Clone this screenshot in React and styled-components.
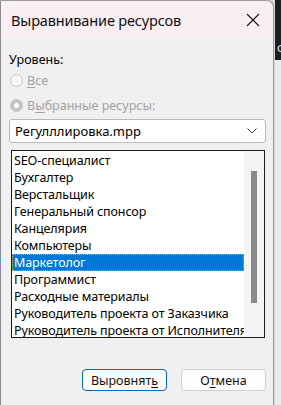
import React from 'react';
import styled, { createGlobalStyle } from 'styled-components';

const GlobalStyle = createGlobalStyle`
  html, body {
    margin: 0;
    padding: 0;
    width: 281px;
    height: 405px;
    overflow: hidden;
    background: #eaeaea;
  }
  #root {
    height: 405px;
  }
`;

const items = [
  'SEO-специалист',
  'Бухгалтер',
  'Верстальщик',
  'Генеральный спонсор',
  'Канцелярия',
  'Компьютеры',
  'Маркетолог',
  'Программист',
  'Расходные материалы',
  'Руководитель проекта от Заказчика',
  'Руководитель проекта от Исполнителя',
];

const App = () => {
  return (
    <Screen>
      <GlobalStyle />
      <Dialog>
        <TitleBar>
          <Title>Выравнивание ресурсов</Title>
          <CloseButton aria-label="Закрыть">
            <svg width="14" height="14" viewBox="0 0 14 14">
              <path d="M1 1 L13 13 M13 1 L1 13" stroke="#1a1a1a" strokeWidth="1.2" fill="none" />
            </svg>
          </CloseButton>
        </TitleBar>
        <Body>
          <Label>Уровень:</Label>
          <RadioRow>
            <Radio />
            <RadioText><u>В</u>се</RadioText>
          </RadioRow>
          <RadioRow>
            <Radio checked />
            <RadioText>В<u>ы</u>бранные ресурсы:</RadioText>
          </RadioRow>
          <Select>
            <span>Регулллировка.mpp</span>
            <svg width="10" height="6" viewBox="0 0 10 6">
              <path d="M0.5 0.5 L5 5 L9.5 0.5" stroke="#444" strokeWidth="1" fill="none" />
            </svg>
          </Select>
          <ListBox>
            <List>
              {items.map((item) => (
                <Item key={item} selected={item === 'Маркетолог'}>{item}</Item>
              ))}
            </List>
            <ScrollTrack>
              <Thumb />
            </ScrollTrack>
          </ListBox>
          <Footer>
            <Button primary>Выровнят<u>ь</u></Button>
            <Button>О<u>т</u>мена</Button>
          </Footer>
        </Body>
      </Dialog>
      <Backdrop>
        <DarkBand><span>Ф</span></DarkBand>
      </Backdrop>
    </Screen>
  );
};

export default App;

const Screen = styled.div`
  display: flex;
  height: 405px;
  font-family: "Noto Sans", "Open Sans", sans-serif;
  color: #000;
`;

const Dialog = styled.div`
  width: 272px;
  flex-shrink: 0;
  display: flex;
  flex-direction: column;
  background: #f0f0f0;
  border: 1px solid #9a9a9a;
  border-bottom: none;
  border-left-color: #8c8c8c;
  border-radius: 0 8px 0 0;
  overflow: hidden;
  box-shadow: 1px 0 3px rgba(0, 0, 0, 0.25);
`;

const TitleBar = styled.div`
  height: 37px;
  background: #f9eef2;
  display: flex;
  align-items: center;
  justify-content: space-between;
  padding: 0 10px 0 10px;
`;

const Title = styled.div`
  font-size: 14.5px;
  color: #111;
  letter-spacing: -0.15px;
`;

const CloseButton = styled.div`
  width: 20px;
  height: 20px;
  display: flex;
  align-items: center;
  justify-content: center;
`;

const Body = styled.div`
  flex: 1;
  display: flex;
  flex-direction: column;
  padding: 13px 7px 0 8px;
  font-size: 12.5px;
`;

const Label = styled.div`
  line-height: 17px;
  color: #000;
`;

const RadioRow = styled.div`
  display: flex;
  align-items: center;
  gap: 4px;
  height: 25px;
  margin-left: 1px;
`;

const Radio = styled.span`
  width: 13px;
  height: 13px;
  border-radius: 50%;
  box-sizing: border-box;
  border: 1px solid ${(p) => (p.checked ? '#c4c4c4' : '#c8c8c8')};
  background: ${(p) => (p.checked ? '#c4c4c4' : '#f6f6f6')};
  display: flex;
  align-items: center;
  justify-content: center;

  &::after {
    content: '';
    display: ${(p) => (p.checked ? 'block' : 'none')};
    width: 5px;
    height: 5px;
    border-radius: 50%;
    background: #fff;
  }
`;

const RadioText = styled.span`
  color: #a2a2a2;
  font-size: 12.5px;

  u {
    text-underline-offset: 2px;
  }
`;

const Select = styled.div`
  margin-top: 1px;
  height: 24px;
  width: 257px;
  box-sizing: border-box;
  background: #fff;
  border: 1px solid #b9b9b9;
  border-radius: 3px;
  display: flex;
  align-items: center;
  justify-content: space-between;
  padding: 0 8px 0 5px;
  font-size: 13px;
`;

const ListBox = styled.div`
  margin: 7px 0 0 2px;
  width: 254px;
  height: 188px;
  box-sizing: border-box;
  border: 1px solid #1a1a1a;
  background: #fff;
  display: flex;
  overflow: hidden;
`;

const List = styled.div`
  flex: 1;
  min-width: 0;
  padding-top: 1px;
`;

const Item = styled.div`
  height: 17px;
  line-height: 17px;
  padding-left: 2px;
  white-space: nowrap;
  overflow: hidden;
  font-size: 12.5px;
  letter-spacing: -0.1px;
  color: ${(p) => (p.selected ? '#fff' : '#000')};
  background: ${(p) => (p.selected ? '#0078d7' : 'transparent')};
  outline: ${(p) => (p.selected ? '1px dotted #e8a04a' : 'none')};
  outline-offset: -1px;
`;

const ScrollTrack = styled.div`
  width: 20px;
  flex-shrink: 0;
  background: #f4f4f4;
  display: flex;
  justify-content: center;
  padding-top: 20px;
  box-sizing: border-box;
`;

const Thumb = styled.div`
  width: 6px;
  height: 132px;
  background: #8a8a8a;
`;

const Footer = styled.div`
  margin-top: 31px;
  display: flex;
  justify-content: flex-end;
  gap: 14px;
`;

const Button = styled.div`
  width: 85px;
  height: 22px;
  box-sizing: border-box;
  border-radius: 4px;
  background: #fdfdfd;
  border: 1px solid ${(p) => (p.primary ? '#0067c0' : '#d0d0d0')};
  display: flex;
  align-items: center;
  justify-content: center;
  font-size: 12.5px;
  color: #111;

  u {
    text-underline-offset: 2px;
  }
`;

const Backdrop = styled.div`
  flex: 1;
  display: flex;
  flex-direction: column;
  background: #ececec;
  border-left: 1px solid #d8d8d8;
`;

const DarkBand = styled.div`
  height: 60px;
  background: #1e1e1e;
  display: flex;
  align-items: flex-end;
  padding-bottom: 3px;
  box-sizing: border-box;
  overflow: hidden;

  span {
    color: #e8e8e8;
    font-size: 12px;
    font-family: "Noto Sans", sans-serif;
    margin-left: 2px;
  }
`;
